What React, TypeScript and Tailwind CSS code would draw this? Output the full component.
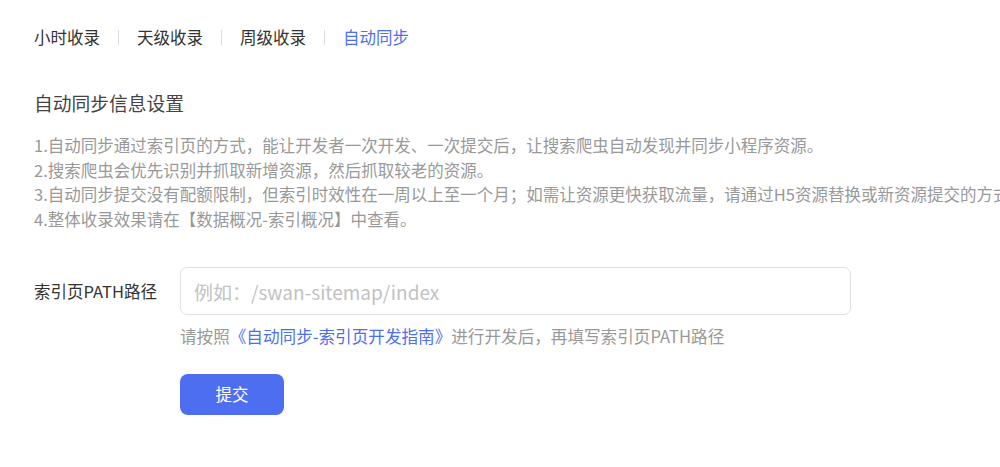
import { useState } from 'react';

const tabs = ['小时收录', '天级收录', '周级收录', '自动同步'];

const tips = [
    '1.自动同步通过索引页的方式，能让开发者一次开发、一次提交后，让搜索爬虫自动发现并同步小程序资源。',
    '2.搜索爬虫会优先识别并抓取新增资源，然后抓取较老的资源。',
    '3.自动同步提交没有配额限制，但索引时效性在一周以上至一个月；如需让资源更快获取流量，请通过H5资源替换或新资源提交的方式提交。',
    '4.整体收录效果请在【数据概况-索引概况】中查看。',
];

export default function App() {
    const [active, setActive] = useState(3);
    const [path, setPath] = useState('');

    return (
        <div
            className="h-[467px] w-full overflow-hidden bg-white px-[34px] text-[#333]"
            style={{ fontFamily: '"Noto Sans CJK SC", "Noto Sans", sans-serif' }}
        >
            {/* Tabs */}
            <nav className="flex items-center pt-[25px]">
                {tabs.map((t, i) => (
                    <div key={t} className="flex items-center">
                        {i > 0 && <span className="mx-[18px] h-[15px] w-px bg-[#dcdcdc]" />}
                        <button
                            onClick={() => setActive(i)}
                            className={`text-[16.5px] leading-6 ${i === active ? 'text-[#4e6ef2]' : 'text-[#333]'}`}
                        >
                            {t}
                        </button>
                    </div>
                ))}
            </nav>

            {/* Settings */}
            <h2 className="mt-[41px] text-[18.75px] leading-[26px] text-[#444]">自动同步信息设置</h2>
            <div className="mt-[17px] whitespace-nowrap text-[16.5px] leading-[24.5px] text-[#999]">
                {tips.map((t) => (
                    <p key={t}>{t}</p>
                ))}
            </div>

            {/* Form */}
            <div className="mt-[36px] flex items-center">
                <label className="w-[146px] shrink-0 text-[16.5px] text-[#333]">索引页PATH路径</label>
                <input
                    value={path}
                    onChange={(e) => setPath(e.target.value)}
                    placeholder="例如：/swan-sitemap/index"
                    className="h-[48px] w-[671px] rounded-[7px] border border-[#e0e0e0] px-[13px] text-[19px] outline-none placeholder:text-[#c2c2c2]"
                />
            </div>
            <p className="ml-[146px] mt-[9px] text-[16.6px] leading-6 text-[#999]">
                请按照<a className="text-[#4e6ef2]">《自动同步-索引页开发指南》</a>进行开发后，再填写索引页PATH路径
            </p>
            <button className="ml-[146px] mt-[26px] h-[41px] w-[104px] rounded-[8px] bg-[#4e6ef2] text-[16.5px] text-white">
                提交
            </button>
        </div>
    );
}
